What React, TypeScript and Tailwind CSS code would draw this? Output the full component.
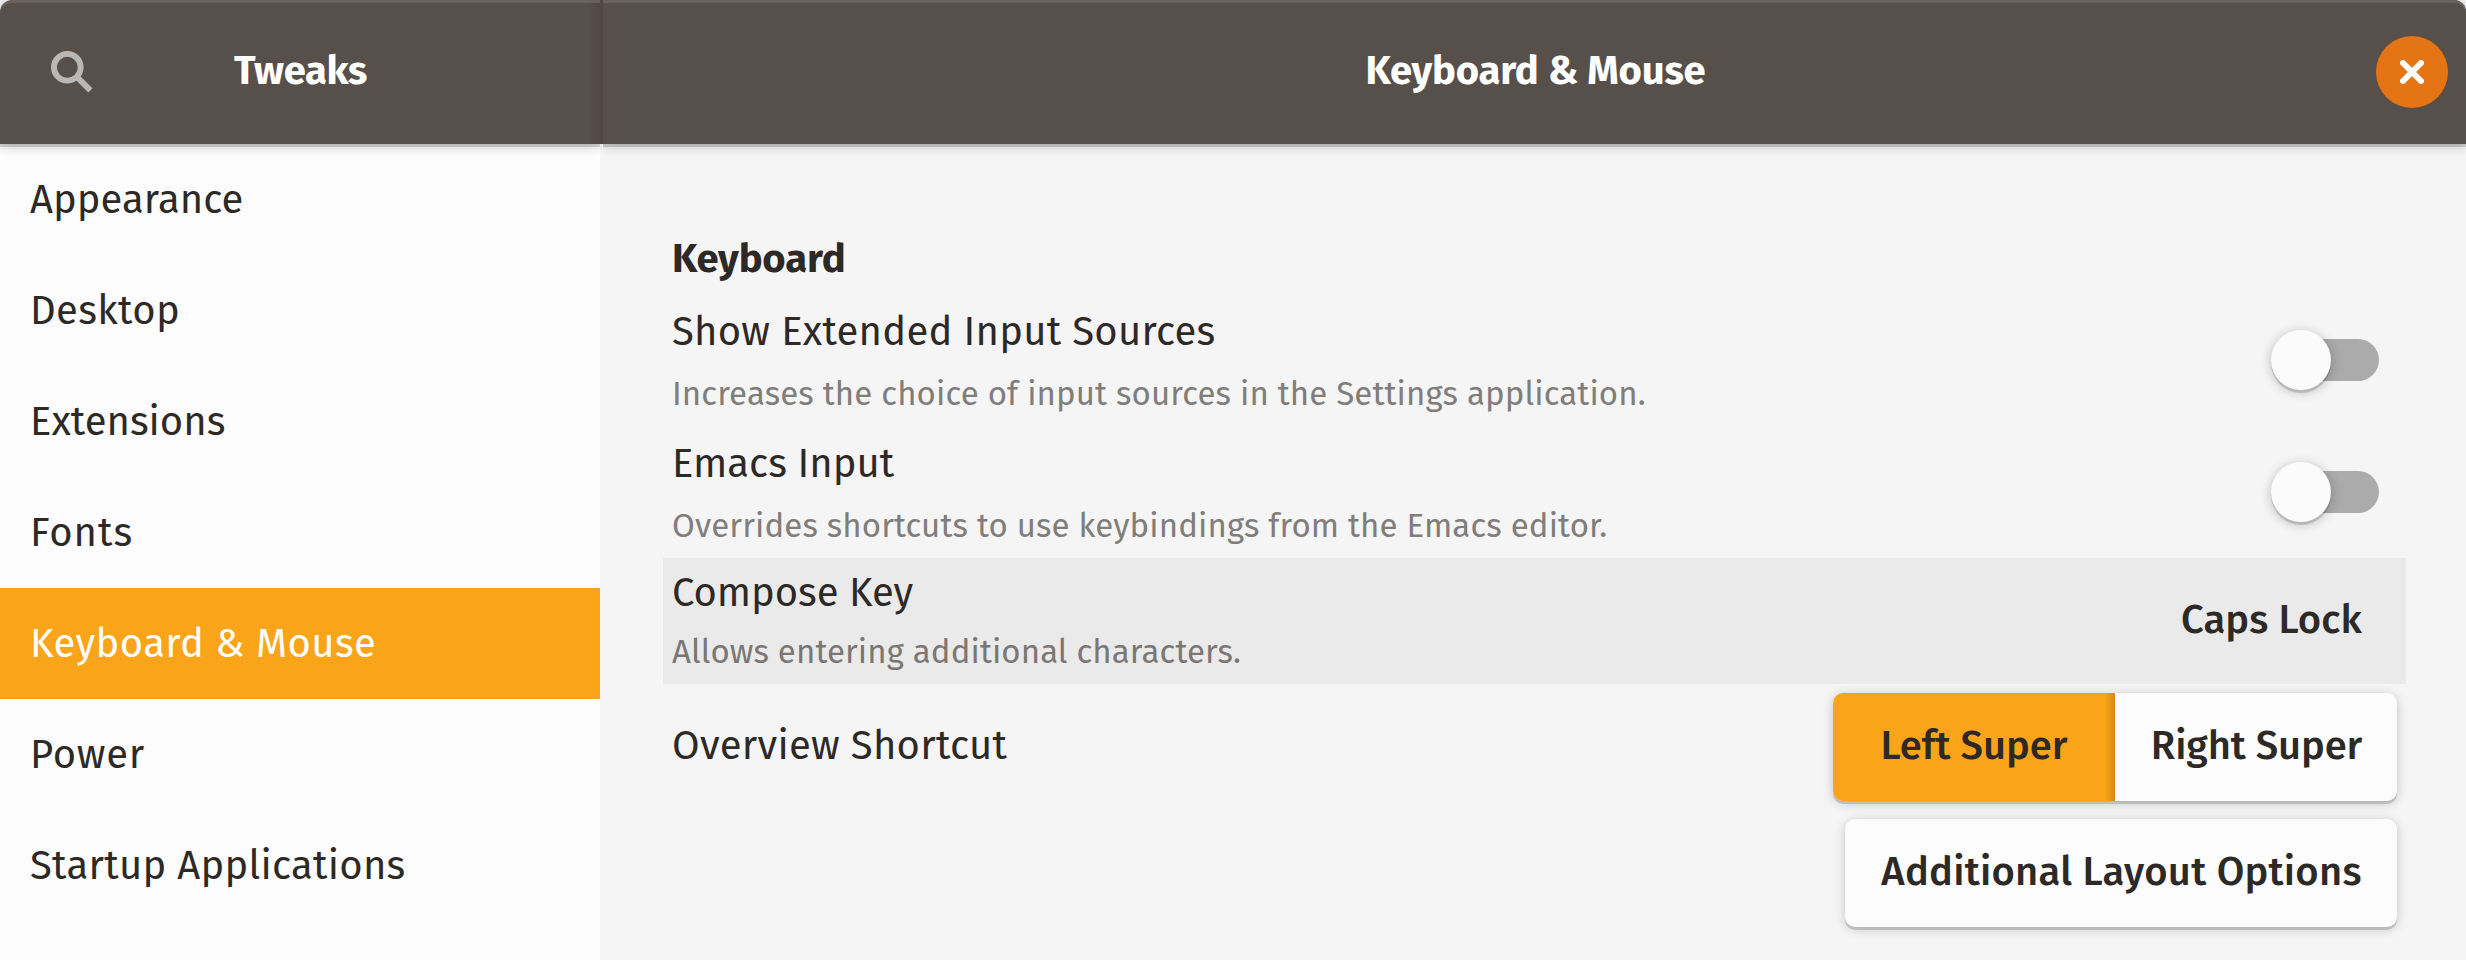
type NavItem = { label: string; tracking: string; active?: boolean };

const NAV: NavItem[] = [
  { label: "Appearance", tracking: "tracking-[0.05px]" },
  { label: "Desktop", tracking: "tracking-[0.35px]" },
  { label: "Extensions", tracking: "tracking-[0px]" },
  { label: "Fonts", tracking: "tracking-[1px]" },
  { label: "Keyboard & Mouse", tracking: "tracking-[0.42px]", active: true },
  { label: "Power", tracking: "tracking-[0.7px]" },
  { label: "Startup Applications", tracking: "tracking-[0.26px]" },
];

const RAISED = "bg-[#fcfcfc] shadow-[0_3px_0_rgba(0,0,0,0.14),0_2px_12px_rgba(0,0,0,0.2)]";

function SearchIcon() {
  return (
    <svg className="h-12 w-12" viewBox="0 0 48 48" fill="none" stroke="#bbb7b4" strokeWidth="5.8">
      <circle cx="19.3" cy="19.3" r="13.4" />
      <path d="M28.6 28.6 42.4 42.4" />
    </svg>
  );
}

function CloseIcon() {
  return (
    <svg className="h-6 w-6" viewBox="0 0 24 24" fill="none" stroke="#fff" strokeWidth="6" strokeLinecap="round">
      <path d="M3 3 21 21M21 3 3 21" />
    </svg>
  );
}

function Toggle() {
  return (
    <div className="mr-[27px] flex h-[42px] w-[108px] items-center rounded-full bg-[linear-gradient(to_right,transparent_12px,#ababab_12px)]">
      <div className="h-[60px] w-[60px] rounded-full bg-[#fbfbfb] shadow-[0_3px_0_rgba(0,0,0,0.14),0_2px_12px_rgba(0,0,0,0.24)]" />
    </div>
  );
}

export default function App() {
  return (
    <div className="flex h-[960px] w-[2466px] flex-col overflow-hidden bg-[#f5f5f5] font-['Fira_Sans','Noto_Sans',sans-serif] text-[40px] leading-[48px] text-[#2d2926]">
      <header className="z-10 flex h-36 shrink-0 text-white">
        <div className="flex w-[600px] items-center rounded-tl-[12px] bg-[#574f4a] bg-[linear-gradient(to_right,transparent_588px,rgba(70,50,60,0.25)_600px)] pb-[3px] shadow-[inset_0_3px_0_#6a605e,0_3px_0_rgba(0,0,0,0.14),0_2px_12px_rgba(0,0,0,0.24)]">
          <div className="ml-12 mt-[3px] flex w-12">
            <SearchIcon />
          </div>
          <h1 className="flex-1 pr-[95px] text-center font-bold tracking-[-0.37px]">Tweaks</h1>
        </div>
        <div className="z-10 w-[3px] bg-[#524845]" />
        <div className="flex flex-1 items-center rounded-tr-[12px] bg-[#574f4a] shadow-[inset_0_3px_0_#6a605e,0_3px_0_rgba(0,0,0,0.14),0_2px_12px_rgba(0,0,0,0.24)] [clip-path:inset(0_0_-20px_0)]">
          <h1 className="flex-1 pb-[3px] pl-[92px] text-center font-bold tracking-[-0.2px]">Keyboard & Mouse</h1>
          <button className="mr-[18px] flex h-[72px] w-[72px] items-center justify-center rounded-full bg-[#e57414]">
            <CloseIcon />
          </button>
        </div>
      </header>

      <div className="flex flex-1">
        <nav className="w-[600px] bg-[#fcfcfc]">
          {NAV.map((n) => (
            <div
              key={n.label}
              className={`flex h-[111px] items-center pl-[30px] ${n.tracking} ${n.active ? "bg-[#faa41a] text-white" : ""}`}
            >
              {n.label}
            </div>
          ))}
        </nav>

        <main className="flex-1 pl-[63px] pr-[60px] pt-[91px]">
          <h2 className="h-[59px] pl-[9px] font-bold tracking-[-0.15px]">Keyboard</h2>

          <div className="flex h-[132px] items-center justify-between">
            <div className="flex flex-col gap-[18px] self-start pl-[9px] pt-[14px]">
              <div className="tracking-[0.25px]">Show Extended Input Sources</div>
              <div className="text-[33px] leading-[40px] tracking-[0.13px] text-[#807d7b]">
                Increases the choice of input sources in the Settings application.
              </div>
            </div>
            <Toggle />
          </div>

          <div className="flex h-[132px] items-center justify-between">
            <div className="flex flex-col gap-[18px] self-start pl-[9px] pt-[14px]">
              <div className="tracking-[0px]">Emacs Input</div>
              <div className="text-[33px] leading-[40px] tracking-[0.12px] text-[#807d7b]">
                Overrides shortcuts to use keybindings from the Emacs editor.
              </div>
            </div>
            <Toggle />
          </div>

          <div className="flex h-[126px] items-center justify-between bg-[#eaeaea]">
            <div className="flex flex-col gap-[15px] self-start pl-[9px] pt-[11px]">
              <div className="tracking-[-0.06px]">Compose Key</div>
              <div className="text-[33px] leading-[40px] tracking-[0.1px] text-[#7b7774]">Allows entering additional characters.</div>
            </div>
            <div className="pb-[3px] pr-[44px] font-medium tracking-[0.1px]">Caps Lock</div>
          </div>

          <div className="flex h-[126px] items-center justify-between pr-[9px]">
            <div className="pb-[3px] pl-[9px] tracking-[0.26px]">Overview Shortcut</div>
            <div className={`flex h-[108px] w-[564px] rounded-[10px] ${RAISED}`}>
              <button className="w-1/2 rounded-l-[10px] bg-[#faa41a] bg-[linear-gradient(to_right,transparent_272px,rgba(60,30,0,0.2)_282px)] pb-[3px] font-medium">
                Left Super
              </button>
              <button className="w-1/2 rounded-r-[10px] pb-[3px] pl-[1px] font-medium tracking-[-0.1px]">Right Super</button>
            </div>
          </div>

          <div className="flex h-[126px] items-center justify-end pr-[9px]">
            <button className={`h-[108px] w-[552px] rounded-[10px] pb-[3px] pl-[1px] font-medium tracking-[0.23px] ${RAISED}`}>
              Additional Layout Options
            </button>
          </div>
        </main>
      </div>
    </div>
  );
}
